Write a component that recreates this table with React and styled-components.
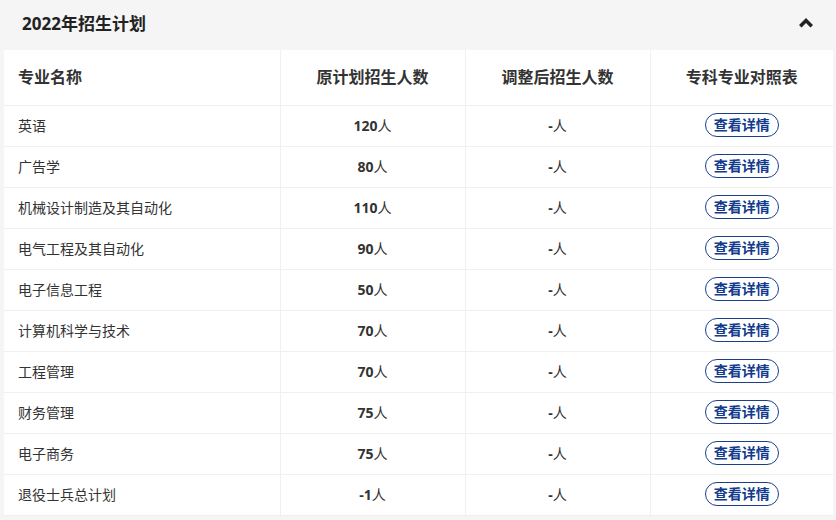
import React from "react";
import styled, { createGlobalStyle } from "styled-components";

const GlobalStyle = createGlobalStyle`
  body {
    margin: 0;
    background: #f5f5f5;
    font-family: "Open Sans", "Noto Sans CJK SC", sans-serif;
    color: #333;
  }
`;

const rows = [
  { name: "英语", plan: "120" },
  { name: "广告学", plan: "80" },
  { name: "机械设计制造及其自动化", plan: "110" },
  { name: "电气工程及其自动化", plan: "90" },
  { name: "电子信息工程", plan: "50" },
  { name: "计算机科学与技术", plan: "70" },
  { name: "工程管理", plan: "70" },
  { name: "财务管理", plan: "75" },
  { name: "电子商务", plan: "75" },
  { name: "退役士兵总计划", plan: "-1" },
];

const Panel = styled.div`
  width: 836px;
  background: #f5f5f5;
`;

const PanelHead = styled.div`
  height: 50px;
  display: flex;
  align-items: center;
  justify-content: space-between;
  padding: 0 22px 5px 22px;
  box-sizing: border-box;
  h2 {
    margin: 0;
    font-size: 17px;
    font-weight: 700;
    color: #222;
  }
`;

const Table = styled.table`
  margin-left: 4px;
  width: 829px;
  border-collapse: collapse;
  background: #fff;
  table-layout: fixed;
`;

const Th = styled.th`
  height: 55px;
  box-sizing: border-box;
  padding: 0 0 2px;
  font-size: 16px;
  font-weight: 700;
  color: #333;
  text-align: ${(p) => (p.$left ? "left" : "center")};
  padding-left: ${(p) => (p.$left ? "14px" : "0")};
  border-left: ${(p) => (p.$left ? "none" : "1px solid #f0f0f0")};
  border-bottom: 1px solid #f0f0f0;
`;

const Td = styled.td`
  height: 41px;
  box-sizing: border-box;
  padding: 0 0 2px;
  font-size: 14px;
  color: #333;
  text-align: ${(p) => (p.$left ? "left" : "center")};
  padding-left: ${(p) => (p.$left ? "14px" : "0")};
  border-left: ${(p) => (p.$left ? "none" : "1px solid #f0f0f0")};
  border-bottom: 1px solid #f0f0f0;
  b {
    font-weight: 700;
  }
`;

const DetailBtn = styled.button`
  width: 74px;
  height: 24px;
  border: 1px solid #1c3f8c;
  border-radius: 12px;
  background: #fff;
  color: #123b8e;
  font-family: inherit;
  font-size: 14px;
  font-weight: 600;
  padding: 0;
  line-height: 22px;
  cursor: pointer;
`;

const Caret = () => (
  <svg width="16" height="12" viewBox="0 0 16 12">
    <path d="M8 1 L15 8 L12.5 10.5 L8 6 L3.5 10.5 L1 8 Z" fill="#222" />
  </svg>
);

export default function App() {
  return (
    <>
      <GlobalStyle />
      <Panel>
        <PanelHead>
          <h2>2022年招生计划</h2>
          <Caret />
        </PanelHead>
        <Table>
          <colgroup>
            <col style={{ width: 276 }} />
            <col style={{ width: 185 }} />
            <col style={{ width: 185 }} />
            <col style={{ width: 183 }} />
          </colgroup>
          <thead>
            <tr>
              <Th $left>专业名称</Th>
              <Th>原计划招生人数</Th>
              <Th>调整后招生人数</Th>
              <Th>专科专业对照表</Th>
            </tr>
          </thead>
          <tbody>
            {rows.map((r) => (
              <tr key={r.name}>
                <Td $left>{r.name}</Td>
                <Td>
                  <b>{r.plan}</b>人
                </Td>
                <Td>
                  <b>-</b>人
                </Td>
                <Td>
                  <DetailBtn>查看详情</DetailBtn>
                </Td>
              </tr>
            ))}
          </tbody>
        </Table>
      </Panel>
    </>
  );
}
